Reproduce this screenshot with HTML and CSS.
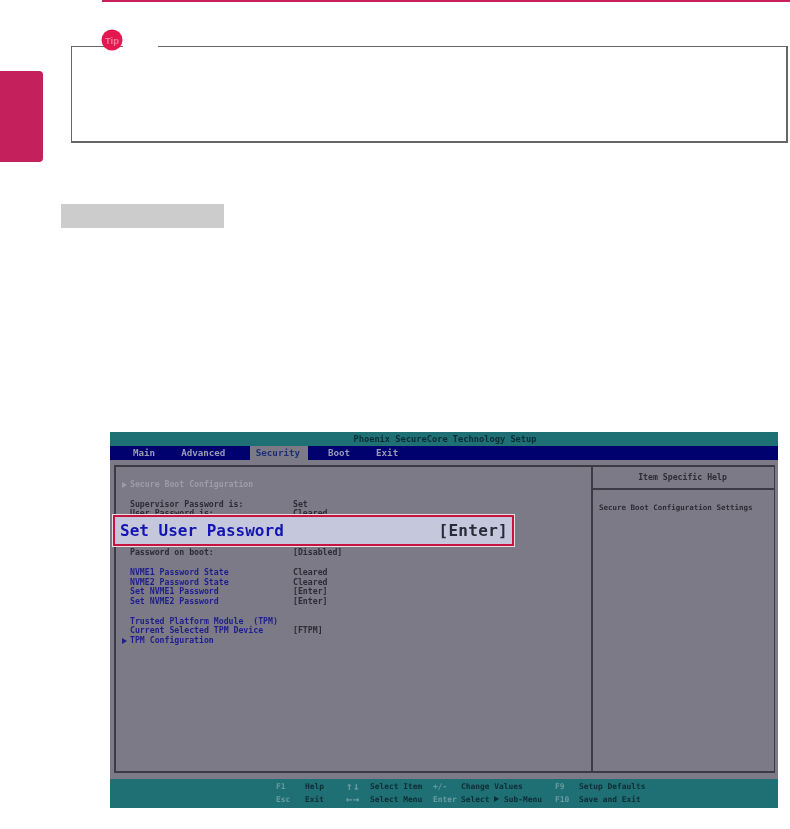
FILE: index.html
```html
<!DOCTYPE html>
<html lang="en">
<head>
<meta charset="utf-8">
<title>Set User Password</title>
<link rel="stylesheet" href="styles.css">
</head>
<body>
<div class="page">
  <div class="top-rule"></div>
  <div class="tip-row">
    <div class="side-tab"></div>
    <div class="tip-box">
      <div class="tip-legend">
        <svg class="tip-icon" width="22" height="22" viewBox="0 0 22 22">
          <circle cx="11" cy="11" r="10.5" fill="#e4184f"/>
          <text x="11" y="14.5" text-anchor="middle" class="tip-text">Tip</text>
        </svg>
      </div>
    </div>
  </div>
  <div class="grey-bar"></div>
  <div class="bios">
    <div class="bios-title">Phoenix SecureCore Technology Setup</div>
    <div class="bios-nav">
      <span class="nav-item nav-main">Main</span>
      <span class="nav-item nav-advanced">Advanced</span>
      <span class="nav-item nav-active">Security</span>
      <span class="nav-item nav-boot">Boot</span>
      <span class="nav-item">Exit</span>
    </div>
    <div class="bios-body">
      <div class="panel">
        <div class="settings">
          <div class="row muted"><span class="arrow"></span><span>Secure Boot Configuration</span><span></span></div>
          <div class="row"></div>
          <div class="row dark"><span></span><span>Supervisor Password is:</span><span>Set</span></div>
          <div class="row dark"><span></span><span>User Password is:</span><span>Cleared</span></div>
          <div class="row"></div>
          <div class="row"></div>
          <div class="row"></div>
          <div class="row dark"><span></span><span>Password on boot:</span><span>[Disabled]</span></div>
          <div class="row"></div>
          <div class="row blue"><span></span><span>NVME1 Password State</span><span class="val">Cleared</span></div>
          <div class="row blue"><span></span><span>NVME2 Password State</span><span class="val">Cleared</span></div>
          <div class="row blue"><span></span><span>Set NVME1 Password</span><span class="val">[Enter]</span></div>
          <div class="row blue"><span></span><span>Set NVME2 Password</span><span class="val">[Enter]</span></div>
          <div class="row"></div>
          <div class="row blue"><span></span><span>Trusted Platform Module  (TPM)</span><span></span></div>
          <div class="row blue"><span></span><span>Current Selected TPM Device</span><span class="val">[FTPM]</span></div>
          <div class="row blue"><span class="arrow"></span><span>TPM Configuration</span><span></span></div>
        </div>
        <div class="highlight">
          <span class="hl-label">Set User Password</span>
          <span class="hl-value">[Enter]</span>
        </div>
      </div>
      <div class="help">
        <div class="help-head">Item Specific Help</div>
        <div class="help-text">Secure Boot Configuration Settings</div>
      </div>
    </div>
    <div class="bios-foot">
      <span class="key">F1</span><span>Help</span><span class="key sym">↑↓</span><span>Select Item</span><span class="key">+/-</span><span>Change Values</span><span class="key">F9</span><span>Setup Defaults</span>
      <span class="key">Esc</span><span>Exit</span><span class="key sym">←→</span><span>Select Menu</span><span class="key">Enter</span><span>Select <i class="tri"></i> Sub-Menu</span><span class="key">F10</span><span>Save and Exit</span>
    </div>
  </div>
</div>
</body>
</html>
```
FILE: styles.css
```css
* { box-sizing: border-box; }
html, body { margin: 0; padding: 0; background: #fff; }
.page { width: 790px; height: 829px; overflow: hidden; position: relative; }
.top-rule { height: 2px; margin-left: 102px; background: #c8205c; }

.tip-row { display: flex; align-items: flex-start; height: 160px; padding-top: 44px; }
.side-tab { width: 43px; height: 91px; margin-top: 25px; background: #c4205c; border-radius: 0 4px 4px 0; flex: none; }
.tip-box { position: relative; width: 717px; height: 97px; margin-left: 28px; flex: none; border: 1px solid #666; border-width: 1px 2px 2px 1px; }
.tip-legend { position: absolute; left: 29px; top: -18px; width: 57px; height: 22px; }
.tip-legend::after { content: ""; position: absolute; left: 22px; top: 17px; width: 35px; height: 2px; background: #fff; }
.tip-icon { display: block; position: relative; z-index: 1; filter: blur(0.3px); }
.tip-text { font: bold 9.5px "Liberation Sans", sans-serif; fill: #f27d96; }

.grey-bar { width: 163px; height: 24px; margin: 42px 0 0 61px; background: #ccc; }

.bios {
  width: 668px; height: 376px; margin: 204px 0 0 110px;
  display: flex; flex-direction: column;
  background: #7c7a86;
  font-family: "DejaVu Sans Mono", "Liberation Mono", monospace;
  font-weight: bold; color: #2c2b36;
  filter: blur(0.45px);
}
.bios-title { height: 14px; background: #1f7075; color: #0c2c33; font-size: 8.7px; line-height: 14px; text-align: center; padding-left: 2px; }
.bios-nav { height: 14px; background: #00006e; display: flex; align-items: stretch; padding-left: 23px; color: #9a9ab4; font-size: 9.2px; line-height: 14px; }
.nav-item { margin-right: 20px; }
.nav-main { margin-right: 26px; }
.nav-advanced { margin-right: 24.5px; }
.nav-active { width: 58px; margin-right: 20px; background: #7c7a86; color: #1c2f7a; text-align: center; padding-right: 2px; }
.nav-boot { margin-right: 26px; }

.bios-body { height: 309px; margin: 5px 3px 0 4px; display: flex; border: 1px solid #3c3b45; border-width: 2px 1px 2px 2px; }
.panel { position: relative; width: 477px; border-right: 2px solid #3c3b45; padding-top: 13px; }
.settings { font-size: 8.2px; line-height: 9.75px; }
.row { display: grid; grid-template-columns: 14px 163px 1fr; height: 9.75px; white-space: pre; }
.arrow { display: block; width: 0; height: 0; margin: 2px 0 0 6px; border-left: 5px solid currentColor; border-top: 3px solid transparent; border-bottom: 3px solid transparent; }
.muted { color: #9d9ca8; }
.dark { color: #2c2b36; }
.blue { color: #1e1e8c; }
.blue .val { color: #2c2b36; }

.highlight {
  position: absolute; left: -3px; top: 48px; width: 401px; height: 31px;
  display: flex; justify-content: space-between; align-items: center;
  padding: 0 4px 0 5px;
  background: #c5c8dc;
  border: 2px solid #c4143f;
  outline: 1px solid #e8dfe5;
  font-size: 16px; color: #1414b4;
}
.hl-value { color: #2a2a3a; letter-spacing: 0.3px; }

.help { flex: 1; }
.help-head { height: 23px; border-bottom: 2px solid #3c3b45; font-size: 8.2px; line-height: 21px; text-align: center; padding-right: 2px; }
.help-text { font-size: 7.5px; line-height: 10px; padding: 13px 0 0 6px; white-space: nowrap; }

.bios-foot {
  height: 29px; margin-top: 6px; padding: 2px 0 0 166px;
  display: grid; grid-template-columns: 29px 42px 23px 63px 28px 94px 24px 1fr; grid-auto-rows: 12.5px;
  align-items: center;
  background: #1f7075; color: #0e2c33; font-size: 7.9px; line-height: 12px; white-space: nowrap;
}
.key { color: #6a9c9f; }
.sym { font-size: 11px; letter-spacing: 0.5px; margin-left: -1px; }
.tri { display: inline-block; width: 0; height: 0; border-left: 5px solid currentColor; border-top: 3px solid transparent; border-bottom: 3px solid transparent; }
```
